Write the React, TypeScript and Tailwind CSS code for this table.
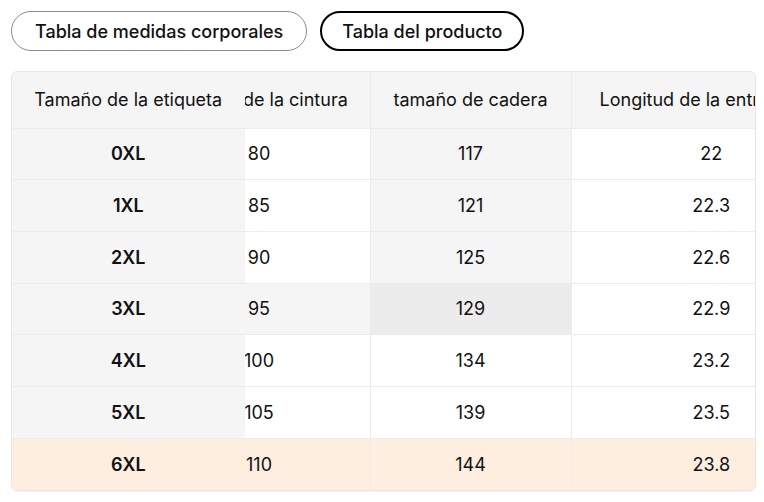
import { useEffect, useRef } from 'react'

const headers = ['Tamaño de la etiqueta', 'Tamaño de la cintura', 'tamaño de cadera', 'Longitud de la entrepierna']

const rows = [
  ['0XL', '80', '117', '22'],
  ['1XL', '85', '121', '22.3'],
  ['2XL', '90', '125', '22.6'],
  ['3XL', '95', '129', '22.9'],
  ['4XL', '100', '134', '23.2'],
  ['5XL', '105', '139', '23.5'],
  ['6XL', '110', '144', '23.8'],
]

// hovered cell: crosshair runs from header/label column to it
const hoverRow = 3
const hoverCol = 2
const selectedRow = 6

function cellBg(r: number, c: number) {
  if (r === selectedRow) return 'bg-[#fdeee0]'
  if (r === hoverRow && c === hoverCol) return 'bg-[#ececec]'
  if (r === hoverRow && c < hoverCol) return 'bg-[#f5f5f5]'
  if (c === hoverCol && r < hoverRow) return 'bg-[#f5f5f5]'
  if (c === 0) return 'bg-[#f5f5f5]'
  return 'bg-white'
}

const colWidth = ['w-[233px] min-w-[233px]', 'min-w-[222px]', 'min-w-[201px]', 'min-w-[280px]']

export default function App() {
  const scroller = useRef<HTMLDivElement>(null)

  useEffect(() => {
    if (scroller.current) scroller.current.scrollLeft = 97
  }, [])

  return (
    <div className="p-[11px] text-[#111]" style={{ fontFamily: 'Inter, "Noto Sans", sans-serif' }}>
      <div className="flex gap-[13px]">
        <button className="h-[40px] px-[23px] rounded-full border border-[#8a8a8a] text-[18px] font-medium">
          Tabla de medidas corporales
        </button>
        <button className="h-[40px] px-[20px] rounded-full border-2 border-black text-[18px] font-medium">
          Tabla del producto
        </button>
      </div>

      <div className="mt-[20px] w-[745px] rounded-md border border-[#e6e6e6] overflow-hidden shadow-[0_1px_1px_rgba(0,0,0,0.06)]">
        <div ref={scroller} className="overflow-x-auto [scrollbar-width:none]">
          <table className="border-collapse text-[18px] whitespace-nowrap">
            <thead>
              <tr className="h-[56px]">
                {headers.map((h, i) => (
                  <th
                    key={h}
                    className={`px-[20px] font-normal text-center bg-[#f5f5f5] border-b border-[#ececec] ${colWidth[i]} ${i === 0 ? 'sticky left-0 z-10' : 'border-l'}`}
                  >
                    {h}
                  </th>
                ))}
              </tr>
            </thead>
            <tbody>
              {rows.map((row, r) => (
                <tr key={row[0]} className="h-[51.7px]">
                  {row.map((v, c) => (
                    <td
                      key={c}
                      className={`px-[20px] text-center ${cellBg(r, c)} ${r < rows.length - 1 ? 'border-b border-[#ececec]' : ''} ${c === 0 ? 'sticky left-0 z-10 font-semibold' : 'border-l border-[#ececec]'}`}
                    >
                      {v}
                    </td>
                  ))}
                </tr>
              ))}
            </tbody>
          </table>
        </div>
      </div>
    </div>
  )
}
